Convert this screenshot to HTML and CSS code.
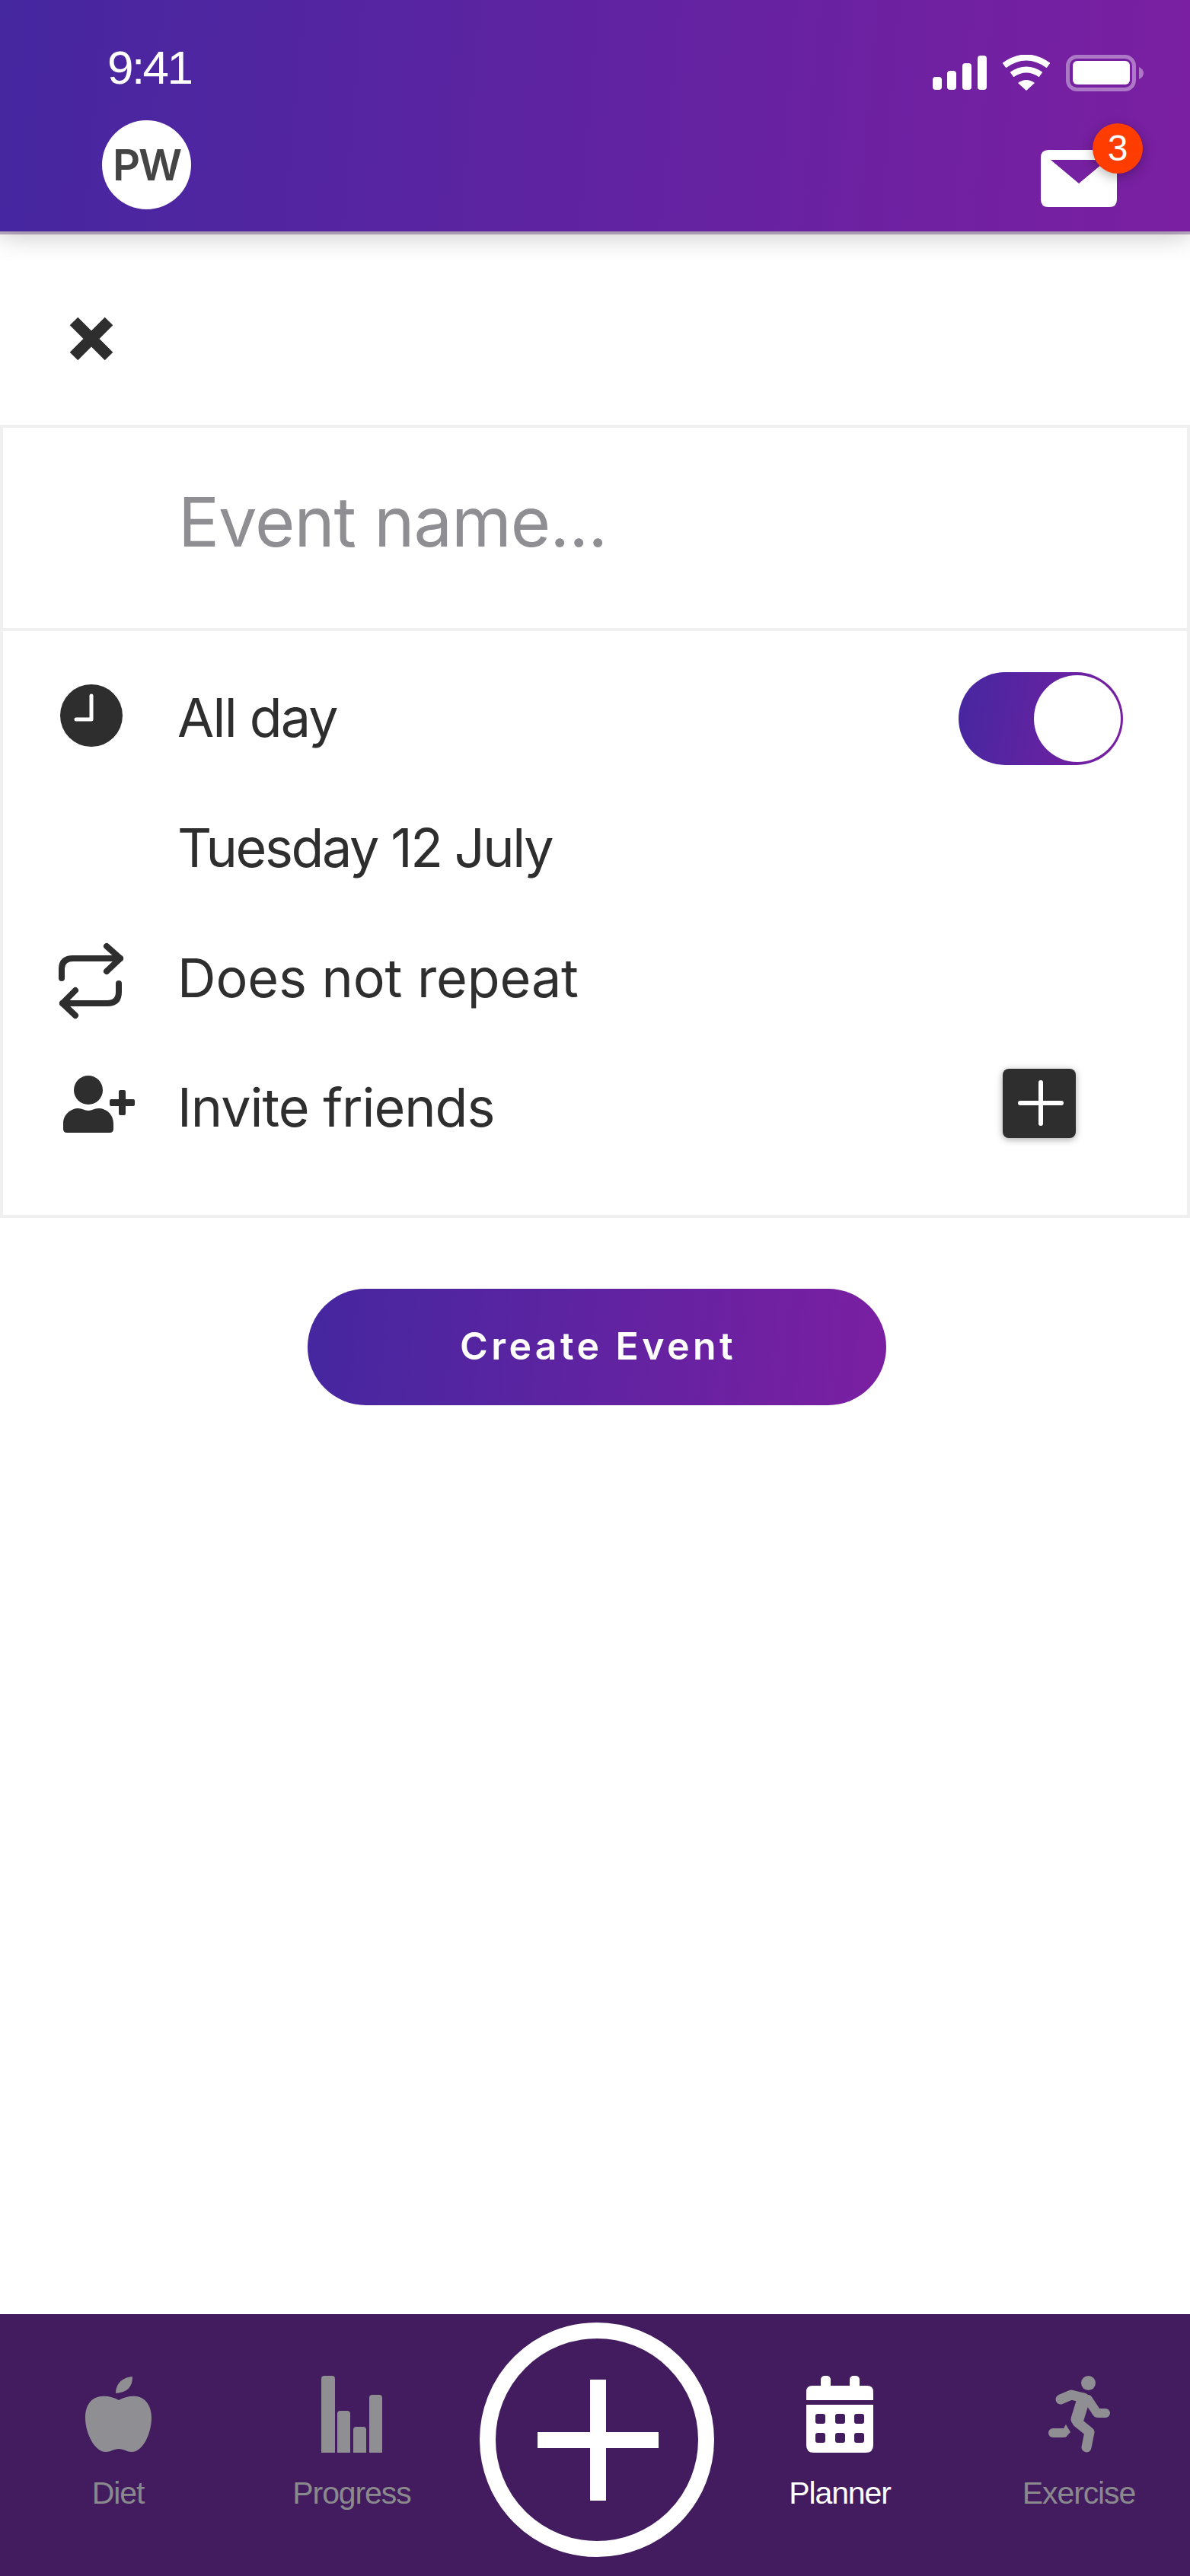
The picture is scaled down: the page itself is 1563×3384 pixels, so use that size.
FILE: index.html
```html
<!DOCTYPE html>
<html lang="en">
<head>
  <meta charset="UTF-8">
  <meta name="viewport" content="width=device-width, initial-scale=1.0">
  <title>Create Event</title>
  <link rel="stylesheet" href="styles.css">
</head>
<body>
  <header class="topo">
    <div class="status-bar">
      <span class="hora">9:41</span>
      <div class="status-icons">
        <svg width="71" height="45" viewBox="0 0 71 45" fill="#fff">
          <rect x="0" y="28" width="12" height="17" rx="4"/>
          <rect x="19" y="20" width="12" height="25" rx="4"/>
          <rect x="39" y="10" width="12" height="35" rx="4"/>
          <rect x="59" y="0" width="12" height="45" rx="4"/>
        </svg>
        <svg width="66" height="47" viewBox="0 0 66 47">
          <path d="M4 14 Q33 -7 62 14" fill="none" stroke="#fff" stroke-width="8"/>
          <path d="M14 26 Q33 13 52 26" fill="none" stroke="#fff" stroke-width="8"/>
          <path d="M22 37 Q33 29 44 37 L33 47 Z" fill="#fff"/>
        </svg>
        <svg width="102" height="48" viewBox="0 0 102 48">
          <rect x="2.5" y="2.5" width="87" height="43" rx="12" fill="none" stroke="#fff" stroke-opacity="0.4" stroke-width="5"/>
          <path d="M96 16 Q102 19 102 24 Q102 29 96 32 Z" fill="#fff" fill-opacity="0.4"/>
          <rect x="9" y="8" width="75" height="31" rx="6" fill="#fff"/>
        </svg>
      </div>
    </div>
    <div class="app-bar">
      <div class="avatar">PW</div>
      <div class="mail">
        <svg width="100" height="75" viewBox="0 0 100 75">
          <path fill="#fff" fill-rule="evenodd" d="M10 0 H90 Q100 0 100 10 V65 Q100 75 90 75 H10 Q0 75 0 65 V10 Q0 0 10 0 Z M13 13 L50 44 L87 13 Z"/>
        </svg>
        <span class="badge">3</span>
      </div>
    </div>
  </header>

  <main class="conteudo">
    <div class="fechar">
      <svg width="58" height="58" viewBox="0 0 58 58">
        <path d="M6 6 L52 52 M52 6 L6 52" stroke="#2e2e2e" stroke-width="15" fill="none"/>
      </svg>
    </div>

    <section class="cartao">
      <div class="nome-evento">Event name...</div>
      <div class="detalhes">
        <div class="linha">
          <div class="linha-icone">
            <svg class="ico-relogio" width="82" height="82" viewBox="0 0 82 82">
              <circle cx="41" cy="41" r="41" fill="#2e2e2e"/>
              <path d="M41 15 V46 H21" fill="none" stroke="#fff" stroke-width="5" stroke-linecap="round" stroke-linejoin="round"/>
            </svg>
          </div>
          <span class="linha-texto texto-dia">All day</span>
          <div class="toggle"><div class="toggle-bola"></div></div>
        </div>
        <div class="linha">
          <div class="linha-icone"></div>
          <span class="linha-texto texto-data">Tuesday 12 July</span>
        </div>
        <div class="linha">
          <div class="linha-icone">
            <svg class="ico-repetir" width="92" height="108" viewBox="13 14 92 108" fill="none" stroke="#2e2e2e" stroke-width="8" stroke-linecap="round" stroke-linejoin="round">
              <path d="M21 64 V52 Q21 38 36 38 H98"/>
              <path d="M80 22 L98 38 L80 55"/>
              <path d="M96 71 V82 Q96 97 81 97 H22"/>
              <path d="M39 80 L22 97 L39 113"/>
            </svg>
          </div>
          <span class="linha-texto texto-repetir">Does not repeat</span>
        </div>
        <div class="linha">
          <div class="linha-icone">
            <svg class="ico-convidar" width="95" height="75" viewBox="23 192 95 75" fill="#2e2e2e">
              <circle cx="56" cy="211" r="19"/>
              <path d="M23 262 V255 C23 243 33 235 43 235 C48 235 51 238 56 238 C61 238 64 235 69 235 C80 235 89 243 89 255 V262 Q89 267 84 267 H28 Q23 267 23 262 Z"/>
              <rect x="84" y="223" width="33" height="9" rx="2"/>
              <rect x="96" y="211" width="9" height="33" rx="2"/>
            </svg>
          </div>
          <span class="linha-texto texto-convidar">Invite friends</span>
          <div class="botao-mais">
            <svg width="60" height="60" viewBox="0 0 60 60">
              <path d="M30 3 V57 M3 30 H57" stroke="#fff" stroke-width="6" stroke-linecap="round"/>
            </svg>
          </div>
        </div>
      </div>
    </section>

    <div class="criar-container">
      <button class="btn-criar">Create Event</button>
    </div>
  </main>

  <nav class="menu">
    <div class="aba">
      <svg width="87" height="101" viewBox="13 11 87 99" fill="#8e8e93">
        <path d="M57 42 C50 38 42 36 34 37 C20 38 13 50 13 65 C13 85 25 110 40 110 C47 110 50 106 57 106 C64 106 67 110 74 110 C89 110 100 85 100 65 C100 50 92 38 80 37 C72 36 64 38 57 42 Z"/>
        <path d="M53 33 C53 20 62 12 75 11 C75 25 68 32 53 33 Z"/>
      </svg>
      <span>Diet</span>
    </div>
    <div class="aba">
      <svg width="80" height="101" viewBox="0 0 80 101" fill="#8e8e93">
        <path d="M0 4 Q0 0 4 0 H14 Q18 0 18 4 V101 H0 Z"/>
        <path d="M21 50 Q21 46 25 46 H34 Q38 46 38 50 V101 H21 Z"/>
        <path d="M42 71 Q42 67 46 67 H55 Q59 67 59 71 V101 H42 Z"/>
        <path d="M63 29 Q63 25 67 25 H76 Q80 25 80 29 V101 H63 Z"/>
      </svg>
      <span>Progress</span>
    </div>
    <div class="aba-central">
      <div class="fab">
        <svg width="159" height="159" viewBox="0 0 159 159">
          <path d="M0 79.5 H159 M79.5 0 V159" stroke="#fff" stroke-width="21"/>
        </svg>
      </div>
    </div>
    <div class="aba ativa">
      <svg width="88" height="101" viewBox="0 0 88 101" fill="#fff">
        <rect x="19" y="0" width="13" height="24" rx="5"/>
        <rect x="57" y="0" width="13" height="24" rx="5"/>
        <path d="M0 32 V21 Q0 13 8 13 H80 Q88 13 88 21 V32 Z"/>
        <path fill-rule="evenodd" d="M0 38 H88 V91 Q88 101 78 101 H10 Q0 101 0 91 Z M15 50 Q12 50 12 53 V60 Q12 63 15 63 H22 Q25 63 25 60 V53 Q25 50 22 50 Z M41 50 Q38 50 38 53 V60 Q38 63 41 63 H48 Q51 63 51 60 V53 Q51 50 48 50 Z M66 50 Q63 50 63 53 V60 Q63 63 66 63 H73 Q76 63 76 60 V53 Q76 50 73 50 Z M15 75 Q12 75 12 78 V85 Q12 88 15 88 H22 Q25 88 25 85 V78 Q25 75 22 75 Z M41 75 Q38 75 38 78 V85 Q38 88 41 88 H48 Q51 88 51 85 V78 Q51 75 48 75 Z M66 75 Q63 75 63 78 V85 Q63 88 66 88 H73 Q76 88 76 85 V78 Q76 75 73 75 Z"/>
      </svg>
      <span>Planner</span>
    </div>
    <div class="aba">
      <svg width="82" height="101" viewBox="15 11 82 101">
        <circle cx="68.5" cy="20.5" r="9.5" fill="#8e8e93"/>
        <g fill="none" stroke="#8e8e93" stroke-linecap="round" stroke-linejoin="round">
          <path d="M32 42 L46 36 L62 40" stroke-width="13"/>
          <path d="M62 42 L54 68" stroke-width="17"/>
          <path d="M68 42 L80 60 H91" stroke-width="12"/>
          <path d="M54 72 L70 85 L66 105" stroke-width="13"/>
          <path d="M22 86 H36" stroke-width="12"/>
        </g>
        <path d="M36 80 L39 75 L45 85 L38 92 Z" fill="#8e8e93"/>
      </svg>
      <span>Exercise</span>
    </div>
  </nav>
</body>
</html>
```

FILE: styles.css
```css
:root {
  --roxo: #4527a0;
  --roxo-claro: #7b1fa2;
  --roxo-menu: #431c5f;
  --preto: #2e2e2e;
  --cinza: #8e8e93;
  --cinza-linha: #f0f0f0;
  --vermelho: #ff3d00;
}

* {
  box-sizing: border-box;
}

body {
  margin: 0;
  min-height: 100vh;
  display: flex;
  flex-direction: column;
  font-family: Inter, 'Liberation Sans', sans-serif;
  background-color: #fff;
  color: var(--preto);
  overflow: hidden;
}

/* Topo */
.topo {
  position: relative;
  z-index: 1;
  height: 304px;
  background: linear-gradient(95deg, var(--roxo), var(--roxo-claro));
  box-shadow: 0 4px 0 rgba(67, 28, 95, 0.35), 0 6px 32px rgba(0, 0, 0, 0.22);
}

.status-bar {
  display: flex;
  justify-content: space-between;
  height: 158px;
  padding: 0 61px 0 141px;
}

.hora {
  margin-top: 54px;
  font-family: 'Liberation Sans', sans-serif;
  font-size: 62px;
  line-height: 70px;
  letter-spacing: -2.6px;
  color: #fff;
}

.status-icons {
  display: flex;
  align-items: flex-start;
  gap: 19px;
  margin-top: 72px;
}

.status-icons svg:first-child {
  margin-top: 1px;
}

.app-bar {
  display: flex;
  justify-content: space-between;
  padding: 0 96px 0 134px;
}

.avatar {
  display: flex;
  align-items: center;
  justify-content: center;
  width: 117px;
  height: 117px;
  border-radius: 50%;
  background-color: #fff;
  color: #444;
  font-size: 56px;
  font-weight: 600;
  letter-spacing: -2px;
}

.mail {
  position: relative;
  width: 100px;
  height: 75px;
  margin-top: 39px;
}

.mail svg {
  display: block;
}

.badge {
  position: absolute;
  top: -35px;
  left: 68px;
  width: 66px;
  height: 66px;
  border-radius: 50%;
  background-color: var(--vermelho);
  box-shadow: 0 4px 16px rgba(0, 0, 0, 0.3);
  color: #fff;
  font-family: 'Liberation Sans', sans-serif;
  font-size: 48px;
  line-height: 66px;
  text-align: center;
}

/* Conteudo */
.conteudo {
  flex: 1;
}

.fechar {
  height: 254px;
  padding: 112px 0 0 91px;
}

.fechar svg {
  display: block;
}

.cartao {
  border: 4px solid var(--cinza-linha);
}

.nome-evento {
  display: flex;
  align-items: center;
  height: 263px;
  padding: 0 0 16px 230px;
  font-size: 90px;
  letter-spacing: -1px;
  color: var(--cinza);
}

.detalhes {
  padding: 28px 0 55px;
  border-top: 4px solid var(--cinza-linha);
}

.linha {
  display: flex;
  align-items: center;
  height: 171px;
}

.linha-icone {
  flex: none;
  display: flex;
  width: 229px;
}

.linha-texto {
  flex: 1;
  font-size: 70px;
}

.texto-dia {
  letter-spacing: -1.8px;
}

.texto-data {
  letter-spacing: -2.4px;
}

.texto-repetir {
  letter-spacing: -0.1px;
}

.texto-convidar {
  letter-spacing: -1px;
  margin-top: -2px;
}

.ico-relogio {
  margin: -5px 0 0 75px;
}

.ico-repetir {
  margin: 8px 0 0 69px;
}

.ico-convidar {
  margin: -11px 0 0 79px;
}

.toggle {
  display: flex;
  justify-content: flex-end;
  align-items: center;
  width: 216px;
  height: 122px;
  margin: 2px 84px 0 0;
  padding-right: 3px;
  border-radius: 61px;
  background: linear-gradient(100deg, var(--roxo), var(--roxo-claro));
}

.toggle-bola {
  width: 114px;
  height: 114px;
  border-radius: 50%;
  background-color: #fff;
}

.botao-mais {
  display: flex;
  align-items: center;
  justify-content: center;
  width: 96px;
  height: 91px;
  margin: -13px 146px 0 0;
  padding-left: 4px;
  border-radius: 8px;
  background-color: var(--preto);
  box-shadow: 0 2px 10px rgba(0, 0, 0, 0.35);
}

.criar-container {
  display: flex;
  justify-content: center;
  margin-top: 93px;
  padding-left: 4px;
}

.btn-criar {
  width: 760px;
  height: 153px;
  padding: 0 0 4px 4px;
  border: none;
  border-radius: 77px;
  background: linear-gradient(95deg, var(--roxo), var(--roxo-claro));
  color: #fff;
  font-family: Inter, 'Liberation Sans', sans-serif;
  font-size: 50px;
  font-weight: 600;
  letter-spacing: 4.4px;
}

/* Menu */
.menu {
  display: grid;
  grid-template-columns: 310px 304px 336px 306px 307px;
  height: 344px;
  background-color: var(--roxo-menu);
}

.aba {
  display: flex;
  flex-direction: column;
  align-items: center;
  padding-top: 81px;
  color: #8a8a8e;
  font-family: 'Liberation Sans', sans-serif;
  font-size: 41px;
  letter-spacing: -1.1px;
}

.aba:last-child {
  padding-left: 15px;
}

.aba span {
  margin-top: 30px;
  line-height: 47px;
}

.aba.ativa {
  color: #fff;
}

.aba-central {
  display: flex;
  justify-content: center;
  padding: 11px 0 0 4px;
}

.fab {
  display: flex;
  align-items: center;
  justify-content: center;
  width: 308px;
  height: 308px;
  padding-left: 2px;
  border: 21px solid #fff;
  border-radius: 50%;
}
```
